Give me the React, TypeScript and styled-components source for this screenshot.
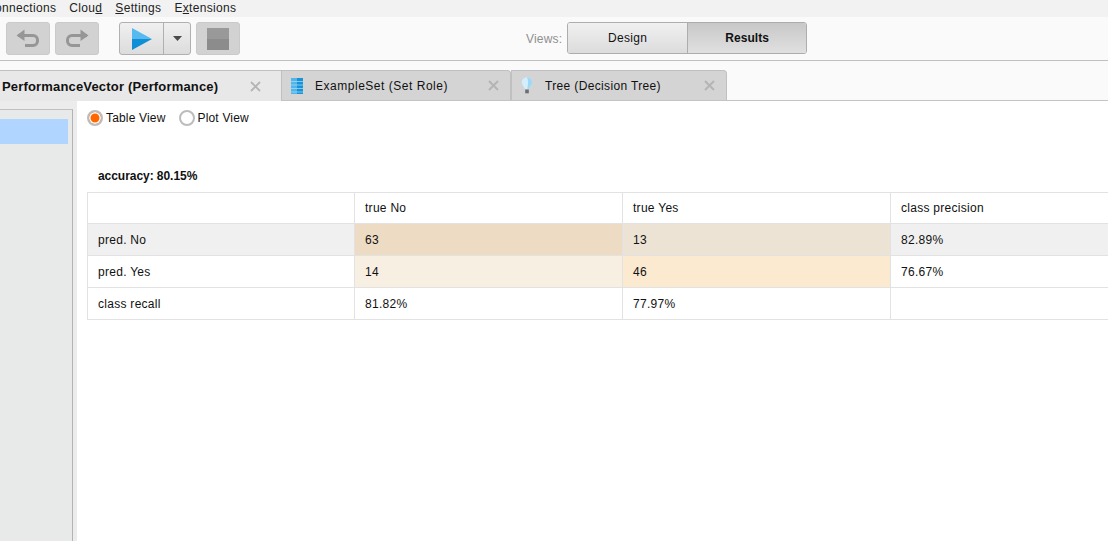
import React from 'react';
import styled, { createGlobalStyle } from 'styled-components';

const GlobalStyle = createGlobalStyle`
  html, body {
    margin: 0;
    padding: 0;
    background: #ffffff;
  }
  body {
    font-family: "Liberation Sans", Arial, sans-serif;
    color: #111111;
  }
`;

const MENU_ITEMS = [
  { label: 'Cloud', mark: 4 },
  { label: 'Settings', mark: 0 },
  { label: 'Extensions', mark: 1 },
];

const TABS = [
  { title: 'ExampleSet (Set Role)', width: 230, spacing: 0.52, icon: 'table' },
  { title: 'Tree (Decision Tree)', width: 216, spacing: 0.35, icon: 'bulb' },
];

const ROWS = [
  { label: 'pred. No', shaded: true, cells: [['63', '#eddcc3'], ['13', '#ece3d5'], ['82.89%', '']] },
  { label: 'pred. Yes', shaded: false, cells: [['14', '#f7efe2'], ['46', '#fbe9d0'], ['76.67%', '']] },
  { label: 'class recall', shaded: false, cells: [['81.82%', ''], ['77.97%', ''], ['', '']] },
];

const UndoIcon = ({ flip }: { flip?: boolean }) => (
  <svg width="26" height="22" viewBox="0 0 26 22" style={flip ? { transform: 'scaleX(-1)' } : undefined}>
    <path d="M3 7.5H18a4.5 4.5 0 0 1 4.5 4.5v1a4.5 4.5 0 0 1-4.5 4.5H10" fill="none" stroke="#969696" strokeWidth="3" />
    <path d="M9.5 1.5V13L1.5 7.5Z" fill="#969696" />
  </svg>
);

const PlayIcon = () => (
  <svg width="20" height="22" viewBox="0 0 20 22">
    <path d="M0 0L20 11H0Z" fill="#56baef" />
    <path d="M0 11H20L0 22Z" fill="#0f8fd6" />
  </svg>
);

const StopIcon = () => (
  <svg width="22" height="22" viewBox="0 0 22 22">
    <rect width="22" height="11" fill="#999999" />
    <rect y="11" width="22" height="11" fill="#8c8c8c" />
  </svg>
);

const CaretIcon = () => (
  <svg width="9" height="5" viewBox="0 0 9 5">
    <path d="M0 0H9L4.5 5Z" fill="#4a4a4a" />
  </svg>
);

const CloseIcon = () => (
  <svg width="11" height="11" viewBox="0 0 11 11">
    <path d="M1 1L10 10M10 1L1 10" stroke="#b4b4b4" strokeWidth="1.8" />
  </svg>
);

const TableIcon = () => (
  <svg width="12" height="16" viewBox="0 0 12 16">
    <rect width="12" height="16" fill="#1793d8" />
    <rect width="6" height="16" fill="#52b5ea" />
    <path d="M0 3.5H12M0 7H12M0 10.5H12M0 14H12" stroke="#a9daf5" strokeWidth="1" opacity="0.75" />
  </svg>
);

const BulbIcon = () => (
  <svg width="12" height="17" viewBox="0 0 12 17">
    <path d="M6 0.5C2.8 0.5 0.8 2.8 0.8 5.5C0.8 8 3.4 9.8 4 12H8C8.6 9.8 11.2 8 11.2 5.5C11.2 2.8 9.2 0.5 6 0.5Z" fill="#d4effc" />
    <path d="M6 0.5C9.2 0.5 11.2 2.8 11.2 5.5C11.2 8 8.6 9.8 8 12H6.5C6.5 8 8 5 6 0.5Z" fill="#9fd8f5" />
    <rect x="4.2" y="12.5" width="3.6" height="3.8" fill="#6e6e6e" />
  </svg>
);

const App = () => (
  <Page>
    <GlobalStyle />
    <MenuBar>
      <ClippedMenuItem>Connections</ClippedMenuItem>
      {MENU_ITEMS.map((item) => (
        <MenuItem key={item.label}>
          {item.label.slice(0, item.mark)}
          <u>{item.label[item.mark]}</u>
          {item.label.slice(item.mark + 1)}
        </MenuItem>
      ))}
    </MenuBar>
    <Toolbar>
      <GreyButton><UndoIcon /></GreyButton>
      <GreyButton><UndoIcon flip /></GreyButton>
      <RunGroup>
        <RunButton><PlayIcon /></RunButton>
        <RunCaret><CaretIcon /></RunCaret>
      </RunGroup>
      <StopButton><StopIcon /></StopButton>
      <ViewsLabel>Views:</ViewsLabel>
      <ViewSwitch>
        <ViewButton>Design</ViewButton>
        <ViewButton $active>Results</ViewButton>
      </ViewSwitch>
    </Toolbar>
    <TabStrip>
      <ActiveTab>
        <ActiveTitle>PerformanceVector (Performance)</ActiveTitle>
        <CloseIcon />
      </ActiveTab>
      {TABS.map((tab) => (
        <Tab key={tab.title} $width={tab.width}>
          <TabIconSlot>{tab.icon === 'table' ? <TableIcon /> : <BulbIcon />}</TabIconSlot>
          <TabTitle $spacing={tab.spacing}>{tab.title}</TabTitle>
          <CloseIcon />
        </Tab>
      ))}
    </TabStrip>
    <Body>
      <SideGutter>
        <SidePanel>
          <SideSelection />
        </SidePanel>
      </SideGutter>
      <Main>
        <RadioRow>
          <RadioLabel><Radio $checked />Table View</RadioLabel>
          <RadioLabel><Radio />Plot View</RadioLabel>
        </RadioRow>
        <Heading>accuracy: 80.15%</Heading>
        <Matrix>
          <Cell />
          <Cell>true No</Cell>
          <Cell>true Yes</Cell>
          <Cell>class precision</Cell>
          {ROWS.map((row) => (
            <React.Fragment key={row.label}>
              <Cell $bg={row.shaded ? '#f0f0f0' : undefined}>{row.label}</Cell>
              {row.cells.map(([value, bg], i) => (
                <Cell key={i} $bg={bg || (row.shaded ? '#f0f0f0' : undefined)}>{value}</Cell>
              ))}
            </React.Fragment>
          ))}
        </Matrix>
      </Main>
    </Body>
  </Page>
);

export default App;

const Page = styled.div`
  width: 1108px;
  height: 541px;
  overflow: hidden;
  display: flex;
  flex-direction: column;
  background: #ffffff;
`;

const MenuBar = styled.div`
  height: 15px;
  flex: none;
  display: flex;
  align-items: center;
  padding-bottom: 2px;
  box-sizing: content-box;
  margin-bottom: -2px;
  background: #f2f2f2;
  border-bottom: 2px solid #d4d4d4;
  overflow: hidden;
  font-size: 12px;
  letter-spacing: 0.33px;
`;

const MenuItem = styled.span`
  margin-left: 13px;
  white-space: nowrap;
  color: #222222;
`;

const ClippedMenuItem = styled(MenuItem)`
  margin-left: -14px;
`;

const Toolbar = styled.div`
  height: 44px;
  flex: none;
  display: flex;
  align-items: flex-start;
  padding: 5px 0 0 6px;
  box-sizing: border-box;
  background: #fafafa;
  border-bottom: 1px solid #c0c0c0;
`;

const GreyButton = styled.div`
  width: 44px;
  height: 33px;
  margin-right: 5px;
  display: flex;
  align-items: center;
  justify-content: center;
  box-sizing: border-box;
  background: #d2d2d2;
  border: 1px solid #cacaca;
  border-radius: 3px;
`;

const RunGroup = styled.div`
  width: 72px;
  height: 33px;
  margin-left: 15px;
  display: flex;
  box-sizing: border-box;
  border: 1px solid #b0b0b0;
  border-radius: 3px;
  background: linear-gradient(#f0f0f0, #dcdcdc);
`;

const RunButton = styled.div`
  width: 44px;
  display: flex;
  align-items: center;
  padding-left: 12px;
  box-sizing: border-box;
  border-right: 1px solid #b0b0b0;
`;

const RunCaret = styled.div`
  flex: 1;
  display: flex;
  align-items: center;
  justify-content: center;
`;

const StopButton = styled(GreyButton)`
  margin-left: 5px;
  margin-right: 0;
`;

const ViewsLabel = styled.span`
  margin: 10px 5px 0 286px;
  font-size: 12px;
  letter-spacing: 0.2px;
  color: #8f8f8f;
`;

const ViewSwitch = styled.div`
  width: 240px;
  height: 32px;
  display: flex;
  box-sizing: border-box;
  border: 1px solid #adadad;
  border-radius: 3px;
  overflow: hidden;
`;

const ViewButton = styled.div<{ $active?: boolean }>`
  flex: 1;
  display: flex;
  align-items: center;
  justify-content: center;
  font-size: 12px;
  letter-spacing: ${(p) => (p.$active ? '0.05px' : '0.3px')};
  padding-bottom: 1px;
  font-weight: ${(p) => (p.$active ? 700 : 400)};
  background: ${(p) => (p.$active ? 'linear-gradient(#c8c8c8, #e0e0e0)' : 'linear-gradient(#f0f0f0, #dcdcdc)')};
  border-left: ${(p) => (p.$active ? '1px solid #adadad' : 'none')};
`;

const TabStrip = styled.div`
  height: 40px;
  flex: none;
  display: flex;
  align-items: flex-end;
  box-sizing: border-box;
  background: #fafafa;
  border-bottom: 1px solid #c4c4c4;
`;

const ActiveTab = styled.div`
  width: 281px;
  height: 31px;
  margin-bottom: -1px;
  display: flex;
  align-items: center;
  padding: 0 20px 0 2px;
  box-sizing: border-box;
  background: #e8e8e8;
  border-top: 1px solid #c0c0c0;
`;

const ActiveTitle = styled.span`
  flex: 1;
  font-size: 13px;
  font-weight: 700;
  letter-spacing: 0.17px;
  white-space: nowrap;
`;

const Tab = styled.div<{ $width: number }>`
  width: ${(p) => p.$width}px;
  height: 30px;
  display: flex;
  align-items: center;
  padding: 0 11px 0 9px;
  box-sizing: border-box;
  background: #d4d4d4;
  border: 1px solid #c0c0c0;
  border-bottom: none;
  border-radius: 0 4px 0 0;
`;

const TabIconSlot = styled.span`
  width: 24px;
  flex: none;
  display: flex;
`;

const TabTitle = styled.span<{ $spacing: number }>`
  flex: 1;
  font-size: 12px;
  letter-spacing: ${(p) => p.$spacing}px;
  white-space: nowrap;
`;

const Body = styled.div`
  flex: 1;
  display: flex;
  min-height: 0;
`;

const SideGutter = styled.div`
  width: 77px;
  flex: none;
  padding-top: 8px;
  box-sizing: border-box;
  background: #ececec;
`;

const SidePanel = styled.div`
  width: 73px;
  height: 100%;
  padding-top: 9px;
  box-sizing: border-box;
  background: #e8eaea;
  border-top: 1px solid #c0c0c0;
  border-right: 1px solid #b4b4b4;
`;

const SideSelection = styled.div`
  width: 68px;
  height: 25px;
  background: #b0d5ff;
`;

const Main = styled.div`
  flex: 1;
  min-width: 0;
  padding: 9px 0 0 10px;
  box-sizing: border-box;
  background: #ffffff;
`;

const RadioRow = styled.div`
  display: flex;
  gap: 13px;
  height: 16px;
`;

const RadioLabel = styled.label`
  display: flex;
  align-items: center;
  gap: 3px;
  font-size: 12px;
  letter-spacing: 0.17px;
  white-space: nowrap;
`;

const Radio = styled.span<{ $checked?: boolean }>`
  width: 16px;
  height: 16px;
  flex: none;
  box-sizing: border-box;
  border-radius: 50%;
  border: 2px solid #bcbcbc;
  background: ${(p) => (p.$checked ? '#ff6600' : '#ffffff')};
  box-shadow: ${(p) => (p.$checked ? 'inset 0 0 0 1.5px #ffffff' : 'none')};
`;

const Heading = styled.div`
  margin: 43px 0 0 11px;
  height: 14px;
  line-height: 14px;
  font-size: 12px;
  font-weight: 700;
  letter-spacing: -0.05px;
`;

const Matrix = styled.div`
  margin-top: 9px;
  width: 1100px;
  display: grid;
  grid-template-columns: 267px 268px 268px 1fr;
  grid-template-rows: 31px repeat(3, 32px);
  box-sizing: border-box;
  border-top: 1px solid #e2e2e2;
  border-left: 1px solid #e2e2e2;
`;

const Cell = styled.div<{ $bg?: string }>`
  display: flex;
  align-items: center;
  padding-left: 10px;
  box-sizing: border-box;
  font-size: 12px;
  letter-spacing: 0.28px;
  background: ${(p) => p.$bg || '#ffffff'};
  border-right: 1px solid #e2e2e2;
  border-bottom: 1px solid #e2e2e2;
`;
